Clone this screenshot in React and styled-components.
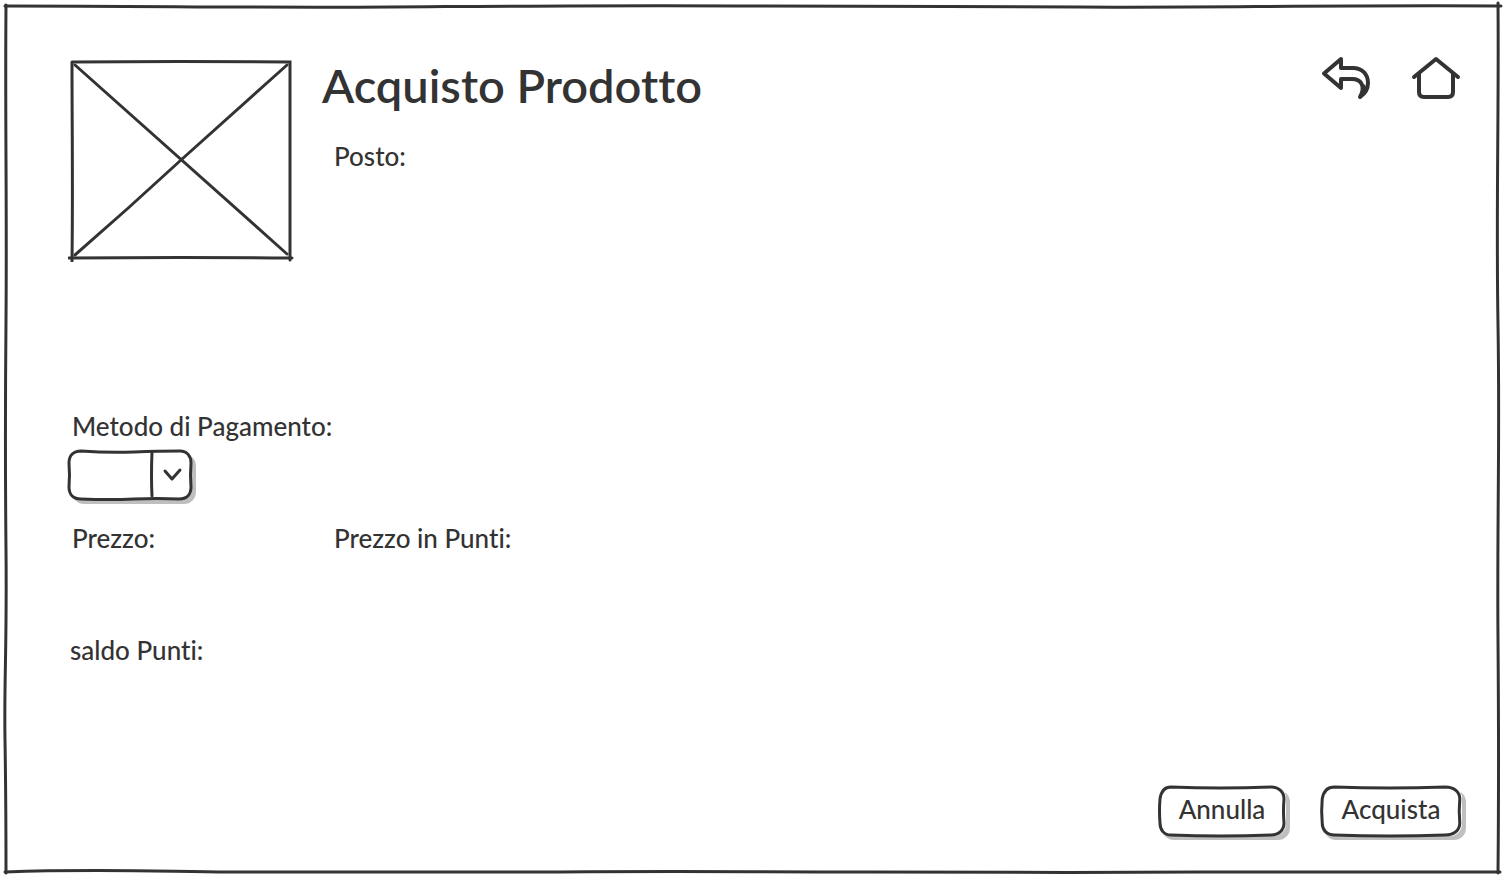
import React from "react";
import styled, { createGlobalStyle } from "styled-components";

const ink = "#333333";

const GlobalStyle = createGlobalStyle`
  * { box-sizing: border-box; }
  body {
    margin: 0;
    background: #ffffff;
    color: ${ink};
    font-family: Lato, "Liberation Sans", sans-serif;
    font-size: 26px;
    font-weight: 500;
    line-height: 32px;
    font-variant-ligatures: none;
  }
`;

const Page = styled.main`
  position: relative;
  min-height: 100vh;
  padding: 54px 42px 42px 68px;
  display: flex;
  flex-direction: column;
`;

const Sketch = styled.svg`
  position: absolute;
  inset: 0;
  width: 100%;
  height: 100%;
  pointer-events: none;
  overflow: visible;
  fill: none;
  stroke: ${ink};
  stroke-width: 3px;
  stroke-linecap: round;
  stroke-linejoin: round;

  path { vector-effect: non-scaling-stroke; }
`;

const Header = styled.header`
  display: flex;
  align-items: flex-start;
`;

const Picture = styled.svg`
  flex: none;
  width: 226px;
  height: 204px;
  margin: 4px 28px 0 0;
  fill: none;
  stroke: ${ink};
  stroke-width: 3px;
  stroke-linecap: round;
`;

const Intro = styled.div`
  flex: 1;
`;

const Title = styled.h1`
  margin: 0 0 24px;
  font-size: 47px;
  font-weight: 600;
  line-height: 62px;
`;

const Text = styled.p`
  margin: 0;
  padding-left: ${(p) => (p.$inset ? "12px" : "0")};
`;

const Nav = styled.nav`
  display: flex;
  gap: 38px;
`;

const IconLink = styled.a`
  display: block;
  width: 52px;
  height: 48px;
  color: ${ink};

  svg {
    display: block;
    width: 52px;
    height: 48px;
    fill: none;
    stroke: currentColor;
    stroke-width: 4px;
    stroke-linecap: round;
    stroke-linejoin: round;
  }
`;

const Form = styled.form`
  flex: 1;
  display: flex;
  flex-direction: column;
  margin-top: 148px;
`;

const Label = styled.label`
  align-self: flex-start;
  padding-left: 4px;
`;

const SelectBox = styled.div`
  position: relative;
  width: 124px;
  height: 50px;
  margin: 8px 0 22px;
  border-radius: 12px;
  background: #ffffff;
  box-shadow: 4px 4px 0 #bfbfbf;
`;

const Select = styled.select`
  appearance: none;
  width: 100%;
  height: 100%;
  padding: 0 44px 0 12px;
  border: 0;
  border-radius: 12px;
  background: transparent;
  color: inherit;
  font: inherit;
`;

const Prices = styled.div`
  display: grid;
  grid-template-columns: 262px 1fr;
  padding-left: 4px;
  margin-bottom: 80px;
`;

const Balance = styled.p`
  margin: 0;
  padding-left: 2px;
`;

const Actions = styled.footer`
  display: flex;
  justify-content: flex-end;
  gap: 34px;
  margin-top: auto;
`;

const Button = styled.button`
  position: relative;
  height: 50px;
  width: ${(p) => (p.$wide ? "142px" : "128px")};
  padding: 0 0 4px;
  border: 0;
  border-radius: 12px;
  background: #ffffff;
  box-shadow: 4px 4px 0 #bfbfbf;
  color: inherit;
  font: inherit;
  font-variant-ligatures: none;
  cursor: pointer;
`;

function PageFrame() {
  return (
    <Sketch viewBox="0 0 1504 878" preserveAspectRatio="none" aria-hidden="true">
      <path d="M5 6C160 6 250 8 390 7S620 5 760 6S960 6 1080 7S1320 5 1501 6" />
      <path d="M1498 3C1499 110 1496 210 1498 325S1497 520 1498 640S1499 770 1498 873" />
      <path d="M5 872C90 869 140 871 230 872S420 873 560 872S730 872 870 872S1080 873 1200 872H1500" />
      <path d="M6 5C5 110 7 210 6 320S5 450 6 550S4 680 5 740S6 820 6 873" />
    </Sketch>
  );
}

function ButtonFrame() {
  return (
    <Sketch viewBox="0 0 128 50" preserveAspectRatio="none" aria-hidden="true">
      <path d="M13 1Q62 3 113 1C121 1 126 6 126 13Q125 25 126 37C126 44 121 49 113 49Q62 51 13 49C6 49 2 44 2 37Q1 25 2 13C3 6 6 1 13 1Z" />
    </Sketch>
  );
}

export default function App() {
  return (
    <>
      <GlobalStyle />
      <Page>
        <PageFrame />
        <Header>
          <Picture viewBox="0 0 226 204" role="img" aria-label="Prodotto">
            <path d="M4 4Q110 3 222 4V202M4 4C4 70 5 130 4 203M1 200Q112 199 224 200" />
            <path d="M7 7L219 196M219 7L113 102Q60 151 7 197" />
          </Picture>
          <Intro>
            <Title>Acquisto Prodotto</Title>
            <Text $inset>Posto:</Text>
          </Intro>
          <Nav>
            <IconLink href="#indietro" aria-label="Indietro">
              <svg viewBox="0 0 52 48">
                <path d="M21 5L4 19.5L21 34V25H32C41 25 46 32 40 43C46 39 48 34 48 29C48 20 42 14 33 14H21Z" />
                <path d="M44 32Q46 35 42 40Z" fill="currentColor" strokeWidth="3" />
              </svg>
            </IconLink>
            <IconLink href="#home" aria-label="Home">
              <svg viewBox="0 0 52 48">
                <path d="M4 23L26 5L48 23M9 19V38Q9 43 14 43H38Q43 43 43 38V19" />
              </svg>
            </IconLink>
          </Nav>
        </Header>
        <Form onSubmit={(e) => e.preventDefault()}>
          <Label htmlFor="metodo">Metodo di Pagamento:</Label>
          <SelectBox>
            <Select id="metodo" defaultValue="">
              <option value="" />
            </Select>
            <Sketch viewBox="0 0 124 50" aria-hidden="true">
              <path d="M13 1Q40 3 66 2T112 1C119 1 123 6 123 13Q122 25 123 37C123 44 119 49 111 49Q90 48 66 49T13 49C5 49 1 44 1 37Q2 25 1 13C1 6 5 1 13 1Z" />
              <path d="M84 2Q83 26 84 46" />
              <path d="M97 21L104 29L112 20" />
            </Sketch>
          </SelectBox>
          <Prices>
            <Text>Prezzo:</Text>
            <Text>Prezzo in Punti:</Text>
          </Prices>
          <Balance>saldo Punti:</Balance>
          <Actions>
            <Button type="button">
              <ButtonFrame />
              Annulla
            </Button>
            <Button type="submit" $wide>
              <ButtonFrame />
              Acquista
            </Button>
          </Actions>
        </Form>
      </Page>
    </>
  );
}
